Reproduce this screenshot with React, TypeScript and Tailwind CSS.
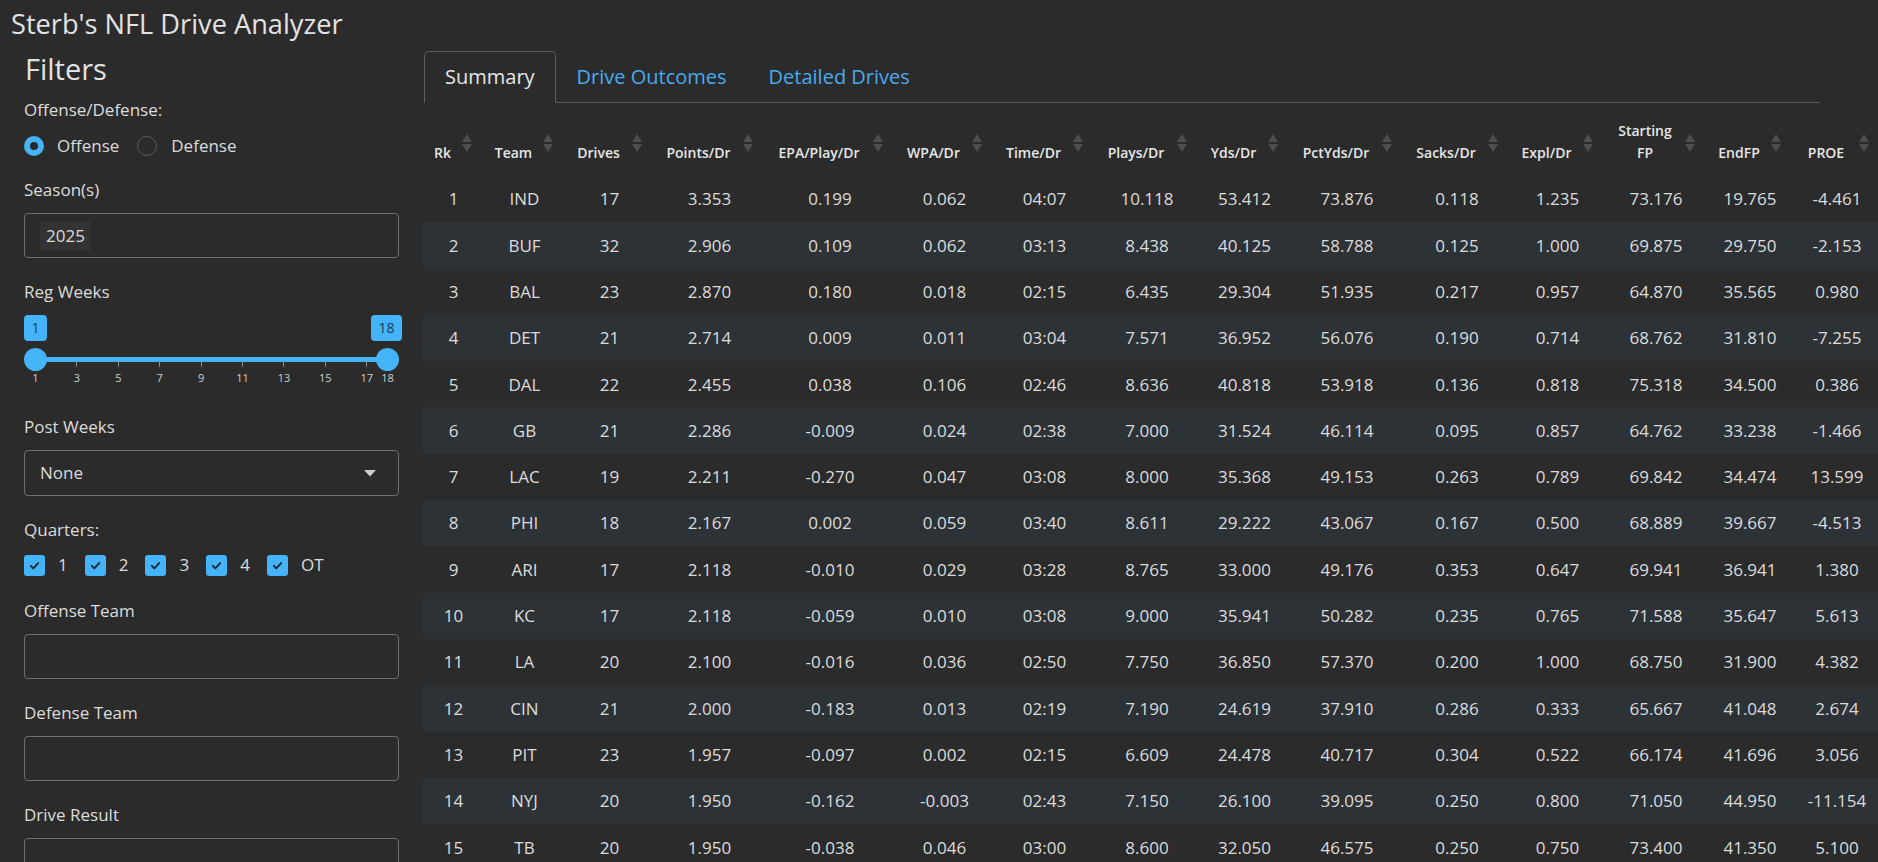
import React from "react";

const rows: (string | number)[][] = [
  [1, "IND", 17, "3.353", "0.199", "0.062", "04:07", "10.118", "53.412", "73.876", "0.118", "1.235", "73.176", "19.765", "-4.461"],
  [2, "BUF", 32, "2.906", "0.109", "0.062", "03:13", "8.438", "40.125", "58.788", "0.125", "1.000", "69.875", "29.750", "-2.153"],
  [3, "BAL", 23, "2.870", "0.180", "0.018", "02:15", "6.435", "29.304", "51.935", "0.217", "0.957", "64.870", "35.565", "0.980"],
  [4, "DET", 21, "2.714", "0.009", "0.011", "03:04", "7.571", "36.952", "56.076", "0.190", "0.714", "68.762", "31.810", "-7.255"],
  [5, "DAL", 22, "2.455", "0.038", "0.106", "02:46", "8.636", "40.818", "53.918", "0.136", "0.818", "75.318", "34.500", "0.386"],
  [6, "GB", 21, "2.286", "-0.009", "0.024", "02:38", "7.000", "31.524", "46.114", "0.095", "0.857", "64.762", "33.238", "-1.466"],
  [7, "LAC", 19, "2.211", "-0.270", "0.047", "03:08", "8.000", "35.368", "49.153", "0.263", "0.789", "69.842", "34.474", "13.599"],
  [8, "PHI", 18, "2.167", "0.002", "0.059", "03:40", "8.611", "29.222", "43.067", "0.167", "0.500", "68.889", "39.667", "-4.513"],
  [9, "ARI", 17, "2.118", "-0.010", "0.029", "03:28", "8.765", "33.000", "49.176", "0.353", "0.647", "69.941", "36.941", "1.380"],
  [10, "KC", 17, "2.118", "-0.059", "0.010", "03:08", "9.000", "35.941", "50.282", "0.235", "0.765", "71.588", "35.647", "5.613"],
  [11, "LA", 20, "2.100", "-0.016", "0.036", "02:50", "7.750", "36.850", "57.370", "0.200", "1.000", "68.750", "31.900", "4.382"],
  [12, "CIN", 21, "2.000", "-0.183", "0.013", "02:19", "7.190", "24.619", "37.910", "0.286", "0.333", "65.667", "41.048", "2.674"],
  [13, "PIT", 23, "1.957", "-0.097", "0.002", "02:15", "6.609", "24.478", "40.717", "0.304", "0.522", "66.174", "41.696", "3.056"],
  [14, "NYJ", 20, "1.950", "-0.162", "-0.003", "02:43", "7.150", "26.100", "39.095", "0.250", "0.800", "71.050", "44.950", "-11.154"],
  [15, "TB", 20, "1.950", "-0.038", "0.046", "03:00", "8.600", "32.050", "46.575", "0.250", "0.750", "73.400", "41.350", "5.100"],
];

const headers: React.ReactNode[] = [
  "Rk", "Team", "Drives", "Points/Dr", "EPA/Play/Dr", "WPA/Dr", "Time/Dr", "Plays/Dr", "Yds/Dr", "PctYds/Dr", "Sacks/Dr", "Expl/Dr",
  <>Starting<br />FP</>, "EndFP", "PROE",
];

const gridCols =
  "grid grid-cols-[61px_81px_89px_111px_130px_99px_101px_104px_91px_114px_106px_95px_102px_86px_88px]";

function SortIcon() {
  return (
    <svg width="10" height="20" viewBox="0 0 10 20" className="absolute right-[12px] top-1/2 -translate-y-1/2">
      <polygon points="5,1 10,9 0,9" fill="#4e4e4e" />
      <polygon points="0,11 10,11 5,19" fill="#4e4e4e" />
    </svg>
  );
}

function Label({ children }: { children: React.ReactNode }) {
  return <div className="text-[17px] leading-[26px] mb-[10px] text-[#dcdcdc]">{children}</div>;
}

function EmptyInput() {
  return <div className="h-[45px] rounded-[4px] border border-[#6f6f6f] mb-[21px]" />;
}

const weekX = (w: number) => 11 + (w - 1) * 20.706;

function Slider() {
  const labels = [1, 3, 5, 7, 9, 11, 13, 15, 17, 18];
  const ticks = [3, 5, 7, 9, 11, 13, 15, 17];
  return (
    <div className="relative h-[78px] mb-[21px]">
      {/* track */}
      <div className="absolute top-[41.5px] h-[5px] bg-[#44b3f7] rounded-full" style={{ left: weekX(1), width: weekX(18) - weekX(1) }} />
      {ticks.map((t) => (
        <div key={t} className="absolute top-[46px] h-[6px] w-px bg-[#8a8a8a]" style={{ left: weekX(t) }} />
      ))}
      {labels.map((l) => (
        <div
          key={l}
          className="absolute top-[56px] w-[20px] -ml-[10px] text-center text-[11px] leading-[14px] text-[#cfcfcf]"
          style={{ left: weekX(l) + 0.5 }}
        >
          {l}
        </div>
      ))}
      {/* handles */}
      <div className="absolute top-[32.5px] w-[23px] h-[23px] -ml-[11.5px] rounded-full bg-[#44b3f7]" style={{ left: weekX(1) }} />
      <div className="absolute top-[32.5px] w-[23px] h-[23px] -ml-[11.5px] rounded-full bg-[#44b3f7]" style={{ left: weekX(18) }} />
      {/* badges */}
      <div className="absolute top-0 left-0 w-[23px] h-[26px] rounded-[4px] bg-[#44b3f7] text-[#1d3b52] text-[14px] leading-[26px] text-center">
        1
      </div>
      <div className="absolute top-0 right-[-3px] w-[31px] h-[26px] rounded-[4px] bg-[#44b3f7] text-[#1d3b52] text-[14px] leading-[26px] text-center">
        18
      </div>
    </div>
  );
}

function Check({ label }: { label: string }) {
  return (
    <div className="flex items-center mr-[17px]">
      <div className="w-[21px] h-[21px] rounded-[3px] bg-[#44b3f7] flex items-center justify-center">
        <svg width="13" height="13" viewBox="0 0 16 16">
          <path d="M3.5 8.5l3 3 6-6.5" stroke="#1f2a33" strokeWidth="2.4" fill="none" strokeLinecap="round" strokeLinejoin="round" />
        </svg>
      </div>
      <span className="ml-[13px] text-[17px] leading-[26px] text-[#dcdcdc]">{label}</span>
    </div>
  );
}

export default function App() {
  return (
    <div className="w-[1878px] h-[862px] overflow-hidden bg-[#2b2b2b] text-[#dcdcdc] font-['Open_Sans',sans-serif]">
      <div className="pt-[7px] pl-[11px] text-[27.2px] leading-[34px] text-[#e2e2e2]">Sterb's NFL Drive Analyzer</div>
      <div className="flex mt-[10px]">
        {/* Sidebar */}
        <div className="w-[411px] shrink-0 pl-[24px] pr-[12px]">
          <div className="mt-px text-[29px] leading-[34px] text-[#e2e2e2] ml-px">Filters</div>
          <div className="mt-[11px]">
            <Label>Offense/Defense:</Label>
          </div>
          <div className="flex items-center h-[26px] mb-[18px]">
            <div className="w-[20px] h-[20px] rounded-full bg-[#44b3f7] flex items-center justify-center">
              <div className="w-[8px] h-[8px] rounded-full bg-[#2b2b2b]" />
            </div>
            <span className="ml-[13px] text-[17px] text-[#dcdcdc]">Offense</span>
            <div className="ml-[18px] w-[20px] h-[20px] rounded-full border border-[#5a5a5a]" />
            <span className="ml-[14px] text-[17px] text-[#dcdcdc]">Defense</span>
          </div>
          <Label>Season(s)</Label>
          <div className="h-[45px] rounded-[4px] border border-[#6f6f6f] mb-[21px] flex items-center pl-[15px]">
            <div className="h-[30px] px-[6px] rounded-[3px] bg-[#333333] text-[17px] leading-[30px] text-[#dcdcdc]">2025</div>
          </div>
          <Label>Reg Weeks</Label>
          <Slider />
          <Label>Post Weeks</Label>
          <div className="h-[46px] rounded-[4px] border border-[#6f6f6f] mb-[21px] flex items-center justify-between pl-[15px] pr-[22px]">
            <span className="text-[17px] text-[#dcdcdc]">None</span>
            <svg width="12" height="7" viewBox="0 0 12 7">
              <polygon points="0,0 12,0 6,6.5" fill="#cfcfcf" />
            </svg>
          </div>
          <Label>Quarters:</Label>
          <div className="flex items-center h-[26px] -mt-[1px] mb-[20px]">
            <Check label="1" />
            <Check label="2" />
            <Check label="3" />
            <Check label="4" />
            <Check label="OT" />
          </div>
          <Label>Offense Team</Label>
          <EmptyInput />
          <Label>Defense Team</Label>
          <EmptyInput />
          <Label>Drive Result</Label>
          <EmptyInput />
        </div>

        {/* Main */}
        <div className="flex-1 min-w-0 pl-[13px] pr-[58px]">
          <div className="flex h-[52px] border-b border-[#5c5c5c]">
            <div className="h-[52px] px-[20px] flex items-center border border-[#5c5c5c] border-b-[#2b2b2b] rounded-t-[5px] bg-[#2b2b2b] text-[20px] text-[#e6e6e6]">
              Summary
            </div>
            <div className="h-[51px] px-[21px] flex items-center text-[20px] text-[#48aaf0]">Drive Outcomes</div>
            <div className="h-[51px] px-[21px] flex items-center text-[20px] text-[#48aaf0]">Detailed Drives</div>
          </div>

          <div className="mt-[7px] w-[1455px] -ml-px">
            <div className={`${gridCols} h-[66px]`}>
              {headers.map((h, i) => (
                <div key={i} className="relative flex items-end justify-center pl-[8px] pr-[30px] pb-[12px]">
                  <div className="text-center text-[14px] leading-[22px] font-semibold text-[#e6e6e6]">{h}</div>
                  <SortIcon />
                </div>
              ))}
            </div>
            {rows.map((r, ri) => (
              <div key={ri} className={`${gridCols} h-[46.3px] ${ri % 2 === 1 ? "bg-[#2d3237]" : ""}`}>
                {r.map((c, ci) => (
                  <div key={ci} className="flex items-center justify-center text-[17px] text-[#dcdcdc] whitespace-nowrap">
                    {c}
                  </div>
                ))}
              </div>
            ))}
          </div>
        </div>
      </div>
    </div>
  );
}
